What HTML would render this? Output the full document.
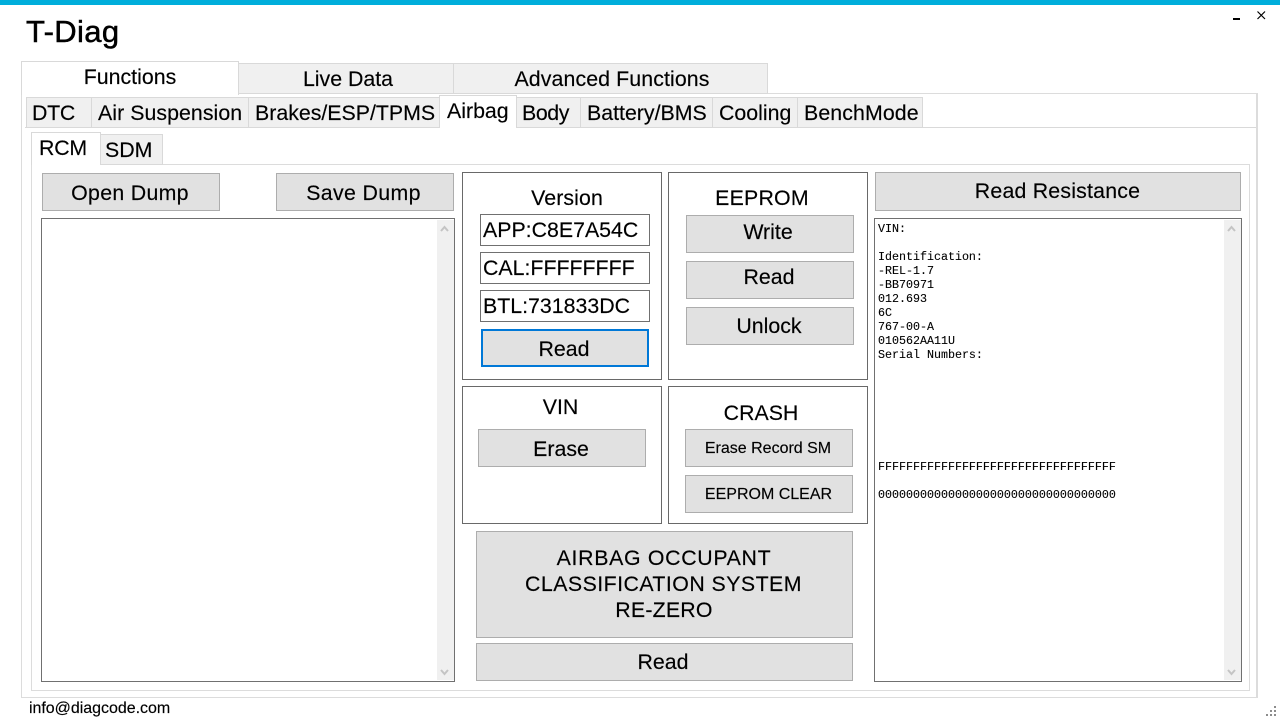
<!DOCTYPE html>
<html><head><meta charset="utf-8"><style>
html,body{margin:0;padding:0;background:#fff}
body{width:1280px;height:720px;position:relative;overflow:hidden;font-family:"Liberation Sans",Arial,sans-serif;color:#000}
.b{position:absolute;box-sizing:border-box}
.tab{background:#f0f0f0;border:1px solid #d9d9d9}
.act{background:#fff;border:1px solid #d9d9d9;border-bottom:0}
.btn{background:#e1e1e1;border:1px solid #adadad}
.grp{background:#fff;border:1px solid #696969}
.tb{background:#fff;border:1px solid #707070}
.t{position:absolute;font-size:21.33px;line-height:26px;height:26px;white-space:nowrap;-webkit-text-stroke:.15px #000}
.c{transform:translateX(-50%)}
.s{font-size:16px}
.sb{position:absolute;background:#f0f0f0;width:17px}
pre{position:absolute;margin:0;font:11.67px/14px "Liberation Mono",monospace;color:#000;-webkit-text-stroke:.1px #000}
svg{position:absolute;overflow:visible}
</style></head><body>
<div class="b" style="left:0;top:0;width:1280px;height:5px;background:#00aedb"></div>
<div class="t" style="left:26px;top:14px;font-size:31px;line-height:36px;height:36px;letter-spacing:.35px;-webkit-text-stroke:.5px #000">T-Diag</div>

<svg style="left:0;top:0" width="1280" height="30">
<rect x="1233" y="18" width="7" height="2" fill="#000"/>
<path d="M1257.5 11.5L1265 19M1265 11.5L1257.5 19" stroke="#000" stroke-width="1.2" fill="none"/>
</svg>

<div class="b" style="left:21px;top:93px;width:1237px;height:605px;border:1px solid #dcdcdc;border-right-width:2px"></div>
<div class="b tab" style="left:238px;top:63px;width:216px;height:31px"></div>
<div class="b tab" style="left:453px;top:63px;width:315px;height:31px"></div>
<div class="b act" style="left:21px;top:61px;width:218px;height:34px"></div>
<div class="t c" style="left:130px;top:64px">Functions</div>
<div class="t c" style="left:348px;top:66px">Live Data</div>
<div class="t c" style="left:612px;top:66px;letter-spacing:.1px">Advanced Functions</div>

<div class="b" style="left:25px;top:127px;width:1231px;height:1px;background:#d9d9d9"></div>
<div class="b tab" style="left:26px;top:97px;width:66px;height:31px"></div>
<div class="b tab" style="left:91px;top:97px;width:158px;height:31px"></div>
<div class="b tab" style="left:248px;top:97px;width:192px;height:31px"></div>
<div class="b tab" style="left:516px;top:97px;width:65px;height:31px"></div>
<div class="b tab" style="left:580px;top:97px;width:133px;height:31px"></div>
<div class="b tab" style="left:712px;top:97px;width:86px;height:31px"></div>
<div class="b tab" style="left:797px;top:97px;width:126px;height:31px"></div>
<div class="b act" style="left:439px;top:95px;width:78px;height:33px"></div>
<div class="t" style="left:32px;top:100px;letter-spacing:-.3px">DTC</div>
<div class="t" style="left:98px;top:100px;letter-spacing:.05px">Air Suspension</div>
<div class="t" style="left:255px;top:100px">Brakes/ESP/TPMS</div>
<div class="t" style="left:447px;top:98px">Airbag</div>
<div class="t" style="left:522px;top:100px;letter-spacing:-.4px">Body</div>
<div class="t" style="left:587px;top:100px">Battery/BMS</div>
<div class="t" style="left:719px;top:100px">Cooling</div>
<div class="t" style="left:804px;top:100px;letter-spacing:.1px">BenchMode</div>

<div class="b" style="left:31px;top:164px;width:1219px;height:527px;border:1px solid #dcdcdc"></div>
<div class="b tab" style="left:100px;top:134px;width:63px;height:31px"></div>
<div class="b act" style="left:31px;top:132px;width:70px;height:33px"></div>
<div class="t" style="left:39px;top:135px;letter-spacing:-.2px">RCM</div>
<div class="t" style="left:105px;top:137px">SDM</div>

<div class="b btn" style="left:42px;top:173px;width:178px;height:38px"></div>
<div class="b btn" style="left:276px;top:173px;width:178px;height:38px"></div>
<div class="t c" style="left:130px;top:180px;letter-spacing:.3px">Open Dump</div>
<div class="t c" style="left:363.500px;top:180px;letter-spacing:.35px">Save Dump</div>
<div class="b tb" style="left:41px;top:218px;width:414px;height:464px"></div>
<div class="sb" style="left:437px;top:220px;height:460px"></div>

<div class="b grp" style="left:462px;top:172px;width:200px;height:208px"></div>
<div class="b grp" style="left:668px;top:172px;width:200px;height:208px"></div>
<div class="b grp" style="left:462px;top:386px;width:200px;height:138px"></div>
<div class="b grp" style="left:668px;top:386px;width:200px;height:138px"></div>

<div class="t c" style="left:567px;top:185px;letter-spacing:.1px">Version</div>
<div class="b tb" style="left:480px;top:214px;width:170px;height:32px"></div>
<div class="b tb" style="left:480px;top:252px;width:170px;height:32px"></div>
<div class="b tb" style="left:480px;top:290px;width:170px;height:32px"></div>
<div class="t" style="left:483px;top:217px">APP:C8E7A54C</div>
<div class="t" style="left:483px;top:255px">CAL:FFFFFFFF</div>
<div class="t" style="left:483px;top:293px">BTL:731833DC</div>
<div class="b btn" style="left:481px;top:329px;width:168px;height:38px;border:2px solid #0078d7"></div>
<div class="t c" style="left:564px;top:336px">Read</div>

<div class="t c" style="left:762px;top:185px;letter-spacing:.2px">EEPROM</div>
<div class="b btn" style="left:686px;top:215px;width:168px;height:38px"></div>
<div class="b btn" style="left:686px;top:261px;width:168px;height:38px"></div>
<div class="b btn" style="left:686px;top:307px;width:168px;height:38px"></div>
<div class="t c" style="left:768px;top:219px">Write</div>
<div class="t c" style="left:769px;top:264px">Read</div>
<div class="t c" style="left:769px;top:313px">Unlock</div>

<div class="t c" style="left:560.500px;top:394px">VIN</div>
<div class="b btn" style="left:478px;top:429px;width:168px;height:38px"></div>
<div class="t c" style="left:561px;top:436px">Erase</div>

<div class="t c" style="left:761px;top:400px">CRASH</div>
<div class="b btn" style="left:685px;top:429px;width:168px;height:38px"></div>
<div class="b btn" style="left:685px;top:475px;width:168px;height:38px"></div>
<div class="t c s" style="left:768px;top:436px">Erase Record SM</div>
<div class="t c s" style="left:768.500px;top:482px">EEPROM CLEAR</div>

<div class="b btn" style="left:476px;top:531px;width:377px;height:107px"></div>
<div class="t c" style="left:664px;top:545px;letter-spacing:.67px">AIRBAG OCCUPANT</div>
<div class="t c" style="left:663.500px;top:571px;letter-spacing:.45px">CLASSIFICATION SYSTEM</div>
<div class="t c" style="left:664px;top:597px;letter-spacing:.2px">RE-ZERO</div>
<div class="b btn" style="left:476px;top:643px;width:377px;height:38px"></div>
<div class="t c" style="left:663px;top:649px">Read</div>

<div class="b btn" style="left:875px;top:172px;width:366px;height:39px"></div>
<div class="t c" style="left:1057.500px;top:178px;letter-spacing:.2px">Read Resistance</div>
<div class="b tb" style="left:874px;top:218px;width:368px;height:464px"></div>
<div class="sb" style="left:1224px;top:220px;height:460px"></div>
<pre style="left:878px;top:222px">VIN:

Identification:
-REL-1.7
-BB70971
012.693
6C
767-00-A
010562AA11U
Serial Numbers:







FFFFFFFFFFFFFFFFFFFFFFFFFFFFFFFFFF

0000000000000000000000000000000000</pre>

<svg style="left:0;top:0" width="1280" height="720">
<g stroke="#c4c4c4" stroke-width="2" fill="none">
<path d="M441 231L444.500 227L448 231"/>
<path d="M441 670L444.500 674L448 670"/>
<path d="M1228 231L1231.500 227L1235 231"/>
<path d="M1228 670L1231.500 674L1235 670"/>
</g>
<g fill="#8c8c8c">
<rect x="1274" y="706" width="2" height="2"/>
<rect x="1270" y="710" width="2" height="2"/><rect x="1274" y="710" width="2" height="2"/>
<rect x="1266" y="714" width="2" height="2"/><rect x="1270" y="714" width="2" height="2"/><rect x="1274" y="714" width="2" height="2"/>
</g>
</svg>

<div class="t s" style="left:29px;top:696px;letter-spacing:-.03px">info@diagcode.com</div>
</body></html>
